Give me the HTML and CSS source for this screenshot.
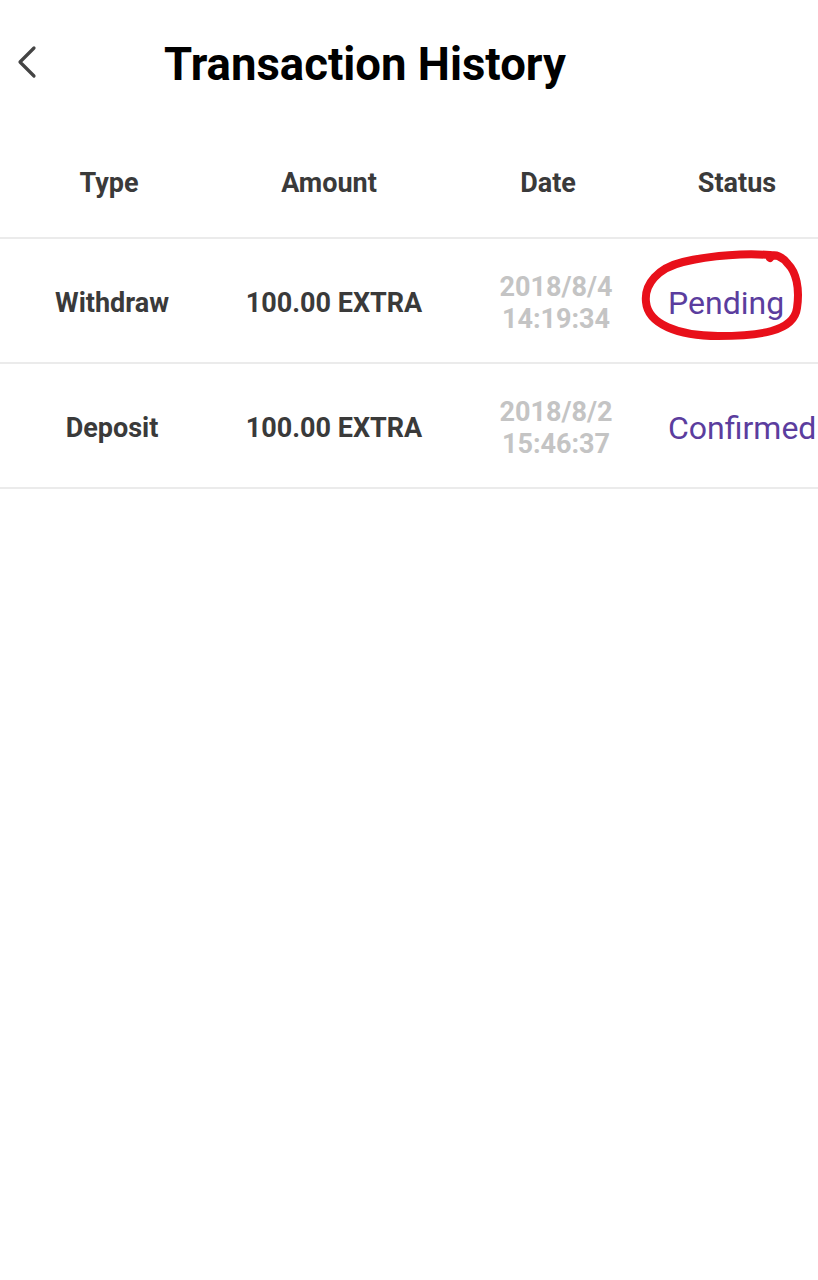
FILE: index.html
```html
<!DOCTYPE html>
<html>
<head>
<meta charset="utf-8">
<link rel="stylesheet" href="styles.css">
</head>
<body>
<div class="app">
  <header class="topbar">
    <button class="back" aria-label="Back">
      <svg width="22" height="34" viewBox="0 0 22 34"><path d="M18 3 L4 17 L18 31" fill="none" stroke="#444" stroke-width="3.2" stroke-linecap="round" stroke-linejoin="round"/></svg>
    </button>
    <h1 class="title">Transaction History</h1>
  </header>
  <div class="table">
    <div class="row head">
      <div class="cell">Type</div>
      <div class="cell">Amount</div>
      <div class="cell">Date</div>
      <div class="cell">Status</div>
    </div>
    <div class="row item">
      <div class="cell type">Withdraw</div>
      <div class="cell amount">100.00 EXTRA</div>
      <div class="cell date">2018/8/4<br>14:19:34</div>
      <div class="cell status">Pending
        <svg class="circle" width="170" height="100" viewBox="0 0 170 100"><path d="M140 12 C110 8 70 12 45 18 C20 24 6 40 8 58 C10 80 40 92 80 92 C120 92 156 88 159 64 C162 44 158 28 150 20 C146 14 136 8 132 14" fill="none" stroke="#e8101a" stroke-width="8" stroke-linecap="round" stroke-linejoin="round"/></svg>
      </div>
    </div>
    <div class="row item">
      <div class="cell type">Deposit</div>
      <div class="cell amount">100.00 EXTRA</div>
      <div class="cell date">2018/8/2<br>15:46:37</div>
      <div class="cell status">Confirmed</div>
    </div>
  </div>
</div>
</body>
</html>
```

FILE: styles.css
```css
* { box-sizing: border-box; }
html, body { margin: 0; padding: 0; background: #fff; }
body { font-family: Roboto, "Noto Sans", sans-serif; width: 818px; height: 1280px; overflow: hidden; }
.topbar { height: 130px; display: flex; align-items: flex-start; gap: 126px; }
.back { border: 0; background: none; padding: 0; margin: 45px 0 0 16px; width: 22px; height: 34px; flex: none; }
.title { margin: 30px 0 0 0; font-size: 45.5px; font-weight: 700; color: #000; line-height: 70px; white-space: nowrap; }
.table { display: flex; flex-direction: column; }
.row { display: grid; grid-template-columns: 218px 222px 216px 1fr; align-items: center; border-bottom: 2px solid #ebebeb; }
.head { height: 109px; }
.head .cell { font-weight: 700; font-size: 27px; color: #3a3a3a; text-align: center; margin-bottom: 2px; }
.item { height: 125px; padding-top: 4px; }
.cell { text-align: center; }
.type, .amount { font-weight: 700; font-size: 27px; color: #3a3a3a; }
.type { padding-left: 6px; }
.amount { padding-left: 10px; }
.date { font-weight: 700; font-size: 27px; color: #c4c4c4; line-height: 32px; padding-left: 16px; }
.status { text-align: left; padding-left: 12px; font-size: 32px; color: #5b3d9e; position: relative; white-space: nowrap; }
.circle { position: absolute; left: -18px; top: -40px; }
```
